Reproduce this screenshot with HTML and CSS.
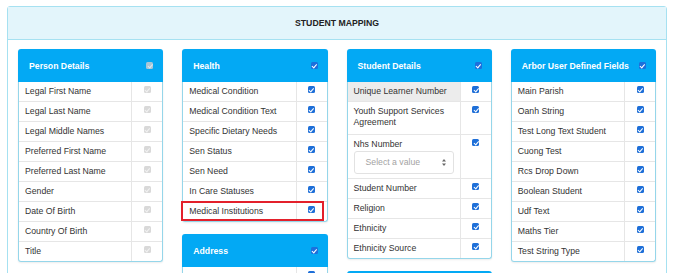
FILE: index.html
```html
<!DOCTYPE html>
<html lang="en">
<head>
<meta charset="UTF-8" />
<meta name="viewport" content="width=device-width, initial-scale=1" />
<title>Student Mapping</title>
<link rel="stylesheet" href="styles.css">
</head>
<body>

<section class="panel">
  <div class="panel-head">STUDENT MAPPING</div>

  <div class="panel-body">

    <!-- колонка 1 -->
    <div class="col">
      <div class="card">
        <div class="card-head">
          <span>Person Details</span>
          <span class="cb off"></span>
        </div>
        <div class="rows">
          <div class="row"><div class="label">Legal First Name</div><div class="tick"><span class="cb off"></span></div></div>
          <div class="row"><div class="label">Legal Last Name</div><div class="tick"><span class="cb off"></span></div></div>
          <div class="row"><div class="label">Legal Middle Names</div><div class="tick"><span class="cb off"></span></div></div>
          <div class="row"><div class="label">Preferred First Name</div><div class="tick"><span class="cb off"></span></div></div>
          <div class="row"><div class="label">Preferred Last Name</div><div class="tick"><span class="cb off"></span></div></div>
          <div class="row"><div class="label">Gender</div><div class="tick"><span class="cb off"></span></div></div>
          <div class="row"><div class="label">Date Of Birth</div><div class="tick"><span class="cb off"></span></div></div>
          <div class="row"><div class="label">Country Of Birth</div><div class="tick"><span class="cb off"></span></div></div>
          <div class="row"><div class="label">Title</div><div class="tick"><span class="cb off"></span></div></div>
        </div>
      </div>
    </div>

    <!-- колонка 2 -->
    <div class="col">
      <div class="card">
        <div class="card-head">
          <span>Health</span>
          <span class="cb head"></span>
        </div>
        <div class="rows">
          <div class="row"><div class="label">Medical Condition</div><div class="tick"><span class="cb"></span></div></div>
          <div class="row"><div class="label">Medical Condition Text</div><div class="tick"><span class="cb"></span></div></div>
          <div class="row"><div class="label">Specific Dietary Needs</div><div class="tick"><span class="cb"></span></div></div>
          <div class="row"><div class="label">Sen Status</div><div class="tick"><span class="cb"></span></div></div>
          <div class="row"><div class="label">Sen Need</div><div class="tick"><span class="cb"></span></div></div>
          <div class="row"><div class="label">In Care Statuses</div><div class="tick"><span class="cb"></span></div></div>
          <div class="row marked"><div class="label">Medical Institutions</div><div class="tick"><span class="cb"></span></div></div>
        </div>
      </div>

      <div class="card">
        <div class="card-head">
          <span>Address</span>
          <span class="cb head"></span>
        </div>
        <div class="rows">
          <div class="row"><div class="label">&nbsp;</div><div class="tick"><span class="cb"></span></div></div>
          <div class="row"><div class="label">&nbsp;</div><div class="tick"><span class="cb"></span></div></div>
        </div>
      </div>
    </div>

    <!-- колонка 3 -->
    <div class="col">
      <div class="card">
        <div class="card-head">
          <span>Student Details</span>
          <span class="cb head"></span>
        </div>
        <div class="rows">
          <div class="row hover"><div class="label">Unique Learner Number</div><div class="tick"><span class="cb"></span></div></div>
          <div class="row tall"><div class="label">Youth Support Services Agreement</div><div class="tick"><span class="cb"></span></div></div>
          <div class="row">
            <div class="label">
              Nhs Number
              <div class="select">
                <span>Select a value</span>
                <svg width="4" height="7" viewBox="0 0 4 7"><path d="M2 0L4 2.6H0Z M2 7L4 4.4H0Z" fill="#666"/></svg>
              </div>
            </div>
            <div class="tick"><span class="cb"></span></div>
          </div>
          <div class="row"><div class="label">Student Number</div><div class="tick"><span class="cb"></span></div></div>
          <div class="row"><div class="label">Religion</div><div class="tick"><span class="cb"></span></div></div>
          <div class="row"><div class="label">Ethnicity</div><div class="tick"><span class="cb"></span></div></div>
          <div class="row"><div class="label">Ethnicity Source</div><div class="tick"><span class="cb"></span></div></div>
        </div>
      </div>

      <div class="card">
        <div class="card-head">
          <span></span>
          <span class="cb head"></span>
        </div>
        <div class="rows">
          <div class="row"><div class="label">&nbsp;</div><div class="tick"><span class="cb"></span></div></div>
        </div>
      </div>
    </div>

    <!-- колонка 4 -->
    <div class="col">
      <div class="card">
        <div class="card-head">
          <span>Arbor User Defined Fields</span>
          <span class="cb head"></span>
        </div>
        <div class="rows">
          <div class="row"><div class="label">Main Parish</div><div class="tick"><span class="cb"></span></div></div>
          <div class="row"><div class="label">Oanh String</div><div class="tick"><span class="cb"></span></div></div>
          <div class="row"><div class="label">Test Long Text Student</div><div class="tick"><span class="cb"></span></div></div>
          <div class="row"><div class="label">Cuong Test</div><div class="tick"><span class="cb"></span></div></div>
          <div class="row"><div class="label">Rcs Drop Down</div><div class="tick"><span class="cb"></span></div></div>
          <div class="row"><div class="label">Boolean Student</div><div class="tick"><span class="cb"></span></div></div>
          <div class="row"><div class="label">Udf Text</div><div class="tick"><span class="cb"></span></div></div>
          <div class="row"><div class="label">Maths Tier</div><div class="tick"><span class="cb"></span></div></div>
          <div class="row"><div class="label">Test String Type</div><div class="tick"><span class="cb"></span></div></div>
        </div>
      </div>
    </div>

  </div>
</section>

</body>
</html>
```

FILE: styles.css
```css
body {
  margin: 0;
  background: #fff;
  color: #333;
  font-family: 'Liberation Sans', Arial, sans-serif;
  font-size: 8.7px;
  overflow: hidden;
  height: 273px;
}
.panel {
  margin: 6px 0 0 7px;
  width: 660px;
  box-sizing: border-box;
  border: 1px solid #a6e1f1;
  border-radius: 3px;
}
.panel-head {
  height: 32px;
  line-height: 32px;
  background: #e3f5fb;
  border-bottom: 1px solid #a6e1f1;
  text-align: center;
  font-weight: 700;
  color: #222;
}
.panel-body {
  display: grid;
  grid-template-columns: repeat(4, 1fr);
  column-gap: 19px;
  padding: 9px 10px;
  align-items: start;
}
.col {
  display: flex;
  flex-direction: column;
  gap: 12px;
}
.card {
  border-radius: 3px;
  box-shadow: 0 1px 2px rgba(0,0,0,0.08);
}
.card-head {
  height: 33px;
  background: #03a9f4;
  border-radius: 3px 3px 0 0;
  color: #fff;
  font-weight: 700;
  display: flex;
  align-items: center;
  justify-content: space-between;
  padding: 0 10px 0 11px;
}
.rows {
  border: 1px solid #95d6ea;
  border-top: none;
  border-radius: 0 0 3px 3px;
}
.row {
  display: flex;
  border-bottom: 1px solid #e6e6e6;
  position: relative;
}
.row:last-child {
  border-bottom: none;
}
.row.hover .label {
  background: #ececec;
}
.row.tall .label {
  padding-bottom: 6px;
}
.label {
  flex: 1;
  padding: 4px 6px;
  line-height: 11px;
}
.tick {
  width: 30px;
  border-left: 1px solid #e6e6e6;
  display: flex;
  justify-content: center;
  align-items: flex-start;
  padding-top: 4px;
}
.row.marked::after {
  content: '';
  position: absolute;
  left: -2px;
  right: 3px;
  top: -1px;
  bottom: 0;
  border: 2px solid #e3202b;
}

/* чекбоксы */
.cb {
  display: inline-block;
  width: 7px;
  height: 7px;
  border-radius: 1.5px;
  background: #1e6fd8;
  position: relative;
  flex: none;
}
.cb::after {
  content: '';
  position: absolute;
  left: 2.3px;
  top: 0.6px;
  width: 1.6px;
  height: 3.6px;
  border-right: 1.3px solid #fff;
  border-bottom: 1.3px solid #fff;
  transform: rotate(40deg);
}
.cb.off {
  background: #d9d9d9;
}
.cb.off::after {
  border-color: #f2f2f2;
}
.cb.head {
  background: #1c6fdc;
}
.card-head .cb.off {
  background: #a9c6d6;
}
.card-head .cb.off::after {
  border-color: #dbe9f0;
}

.select {
  margin-top: 1px;
  height: 23px;
  box-sizing: border-box;
  border: 1px solid #e2e2e2;
  border-radius: 3px;
  display: flex;
  align-items: center;
  justify-content: space-between;
  padding: 0 7px 0 11px;
  color: #a3a3a3;
}
```
